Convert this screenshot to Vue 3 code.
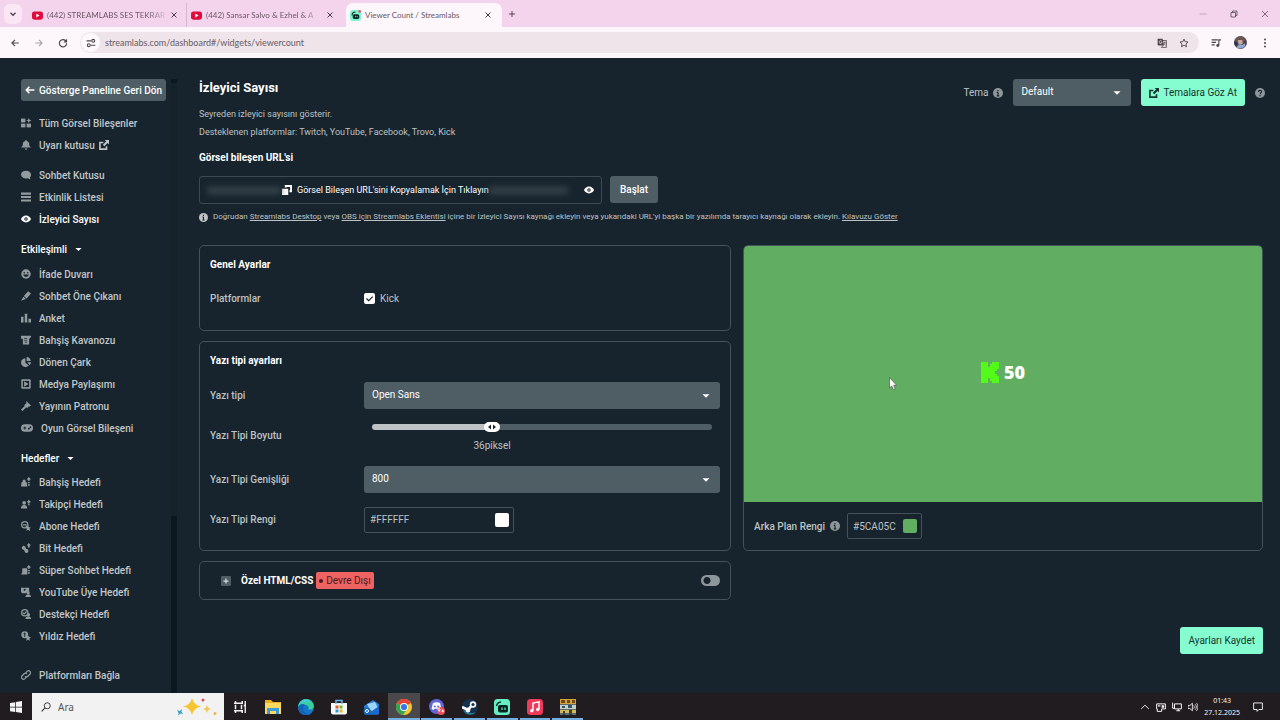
<script setup>
import { ref, computed } from 'vue'

const tabs = [
  { title: '(442) STREAMLABS SES TEKRAR', icon: 'youtube' },
  { title: '(442) Sansar Salvo & Ezhel & A', icon: 'youtube' },
  { title: 'Viewer Count / Streamlabs', icon: 'streamlabs', active: true }
]

const icons = {
  chevronDown: '<path d="M4 6l4 4 4-4" fill="none" stroke="currentColor" stroke-width="2"/>',
  chevronUp: '<path d="M2 11l6-6 6 6" fill="none" stroke="currentColor" stroke-width="1.5"/>',
  close: '<path d="M3 3l10 10M13 3L3 13" fill="none" stroke="currentColor" stroke-width="2"/>',
  closeThin: '<path d="M2 2l12 12M14 2L2 14" fill="none" stroke="currentColor" stroke-width="1.4"/>',
  plus: '<path d="M8 2v12M2 8h12" fill="none" stroke="currentColor" stroke-width="1.8"/>',
  minimize: '<path d="M1 8h14" stroke="#a590a0" stroke-width="1.3"/>',
  restore: '<path d="M2 5h9v9H2zM5 5V2h9v9h-3" fill="none" stroke="currentColor" stroke-width="1.5"/>',
  back: '<path d="M14 8H3M8 3L3 8l5 5" fill="none" stroke="currentColor" stroke-width="1.8"/>',
  backBold: '<path d="M15 8H3M7 3L2 8l5 5" fill="none" stroke="currentColor" stroke-width="2.4"/>',
  forward: '<path d="M2 8h11M8 3l5 5-5 5" fill="none" stroke="currentColor" stroke-width="1.8"/>',
  reload: '<path d="M13 5.5A5.8 5.8 0 1 0 13.800 8.500" fill="none" stroke="currentColor" stroke-width="1.9"/><path d="M14.500 1v6h-6z" fill="currentColor"/>',
  tune: '<g fill="none" stroke="currentColor" stroke-width="1.8"><path d="M1 4.500h7M8 11.500h7"/><circle cx="11.500" cy="4.500" r="2.300"/><circle cx="4.500" cy="11.500" r="2.300"/></g>',
  translate: '<path d="M1 1h8l2 11H3a2 2 0 0 1-2-2z" fill="currentColor"/><path d="M8 4h7v11H7l3-3" fill="none" stroke="currentColor" stroke-width="1.3"/><path d="M10 7h4M12 6v1M13.500 7c-.5 2-2 3.500-3.500 4M10.500 8.500c1 1.500 2 2.300 3.500 3" fill="none" stroke="currentColor"/><path d="M7.500 5A2.300 2.300 0 1 0 8 7H6" fill="none" stroke="#efe4ea" stroke-width="1.200"/>',
  star: '<path d="M8 1.800l1.900 4.100 4.500.5-3.300 3.100.9 4.500-4-2.300-4 2.300.9-4.500-3.300-3.100 4.500-.5z" fill="none" stroke="currentColor" stroke-width="1.500"/>',
  queue: '<path d="M1 3h10M1 7h7M1 11h5M12.500 12V3H16" fill="none" stroke="currentColor" stroke-width="1.800"/><circle cx="10.800" cy="12" r="2.300" fill="currentColor"/>',
  more: '<g fill="currentColor"><circle cx="8" cy="2.500" r="1.600"/><circle cx="8" cy="8" r="1.600"/><circle cx="8" cy="13.500" r="1.600"/></g>',
  avatar: '<circle cx="8" cy="8" r="8" fill="#4b4652"/><path d="M1 5C4-1 12-1 15 5l-4 2-4-3-3 4z" fill="#6c5750"/><path d="M5 5h5l1 4-3 2-3-2z" fill="#c9a79d"/><path d="M3 14l3-4 4 1 3-2 1 3c-3 4-8 4-11 2z" fill="#92a7cf"/><path d="M1 6l3 3-1 4C0 11 0 8 1 6z" fill="#243454"/>',
  youtube: '<rect y="2" width="16" height="12" rx="3.500" fill="#e00a3c"/><path d="M6.300 5.200v5.600L11 8z" fill="#fff"/>',
  streamlabs: '<rect width="16" height="16" rx="4" fill="#80f5d2"/><path d="M3 8a5 5 0 0 1 5-5" fill="none" stroke="#0b2a25" stroke-width="1.500"/><rect x="4" y="6" width="9.500" height="7" rx="2.500" fill="#08251f"/><path d="M8 8.500v2M10.500 8.500v2" stroke="#80f5d2" stroke-width="1.200"/><circle cx="14" cy="2" r="2" fill="#e8536a"/>',
  grid: '<g fill="currentColor"><rect y="1" width="7" height="6"/><rect y="9" width="7" height="6"/><rect x="9" y="9" width="7" height="6"/><path d="M12.500 0l1.300 2.700 2.700 1.300-2.700 1.300-1.300 2.700-1.300-2.700L8.500 4l2.700-1.300z"/></g>',
  bell: '<path d="M7 0h2v1.500c2.500.5 4 2.300 4 4.500 0 3.500 1 4 3 6H0c2-2 3-2.500 3-6 0-2.200 1.500-4 4-4.500zM6 13.500h4a2 2 0 0 1-4 0z" fill="currentColor"/>',
  external: '<path d="M7 4H1.500v10.500H12V10" fill="none" stroke="currentColor" stroke-width="2.600"/><path d="M9 0h7v7l-2.300-2.300-5.200 5.200-2.400-2.400 5.200-5.200z" fill="currentColor"/>',
  chat: '<path d="M8 1c4.500 0 8 2.500 8 6 0 2.300-.5 3.500-1.500 4.500L15 15l-4-1.800c-6 1.500-11-1.700-11-6C0 3.500 3.500 1 8 1z" fill="currentColor"/>',
  list: '<path d="M0 2.500h16M0 8h16M0 13.500h16" stroke="currentColor" stroke-width="3.400"/>',
  eye: '<path d="M8 2.500c4 0 7 3 8 5.500-1 2.500-4 5.500-8 5.500S1 10.500 0 8c1-2.500 4-5.500 8-5.500z" fill="currentColor"/><circle cx="8" cy="8" r="2.800" fill="#17242d"/><circle cx="8" cy="8" r="1.200" fill="currentColor"/>',
  smile: '<circle cx="8" cy="8" r="7.500" fill="currentColor"/><g fill="#17242d"><circle cx="5.200" cy="6" r="1.300"/><circle cx="10.800" cy="6" r="1.300"/><path d="M3.500 8.800h9c-.8 5-8.200 5-9 0z"/></g>',
  highlighter: '<path d="M11.500 0.500L16 4 9 12 4.500 8zM3.800 9l4.200 3.700-4 1.300L0 15.500z" fill="currentColor"/>',
  bars: '<path d="M0 6h4v9H0zM6 1h4v14H6zM12 9h4v6h-4z" fill="currentColor"/>',
  jar: '<path d="M0 1h16v3h-2v2h-1v9H3V6H0z" fill="currentColor"/><path d="M5 5.500h5M5 8.500h5M6 11.500h4" stroke="#17242d" stroke-width="1.200"/>',
  pie: '<path d="M7 2v7l5.500 4.500A7 7 0 1 1 7 2z" fill="currentColor"/><path d="M9 0a7 7 0 0 1 6.500 6.500H9zM10 8.500h6a7 7 0 0 1-2 4.500z" fill="currentColor"/>',
  play: '<rect x=".5" y=".5" width="15" height="15" rx="1.500" fill="currentColor"/><rect x="3" y="3" width="10" height="10" fill="#17242d"/><path d="M5 3.500v9l7-4.500z" fill="currentColor"/>',
  gavel: '<path d="M8.500 0l7.500 7-2.500 2-1-.5-2.500 3L8.500 10 2.500 16 0 13.500 6 8 5 6.500 8.500 4z" fill="currentColor"/>',
  gamepad: '<rect y="3" width="16" height="10" rx="5" fill="currentColor"/><path d="M3 8h4M5 6v4" stroke="#17242d" stroke-width="1.300"/><circle cx="10.500" cy="9" r="1.200" fill="#17242d"/><circle cx="12.500" cy="7" r="1.200" fill="#17242d"/>',
  tipGoal: '<g fill="currentColor"><path d="M1 8h8l1 7H0z"/><circle cx="5" cy="6.500" r="2.500"/><path d="M12.500 0L16 4h-2v2h-3V4H9zM11 8h3v2h-3zM11 11.500h3V14h-3z"/></g>',
  followGoal: '<g fill="currentColor"><circle cx="5" cy="6" r="3"/><path d="M0 15c0-7 10-7 10 0zM12.500 1L16 5h-2v2h-3V5H9zM11 8.500h3V10h-3z"/></g>',
  subGoal: '<circle cx="6" cy="6" r="5" fill="none" stroke="currentColor" stroke-width="2"/><path d="M3 6h6M8 8l6 7" stroke="currentColor" stroke-width="2"/><path d="M11.500 7l1.200 3 3.300.3-2.500 2 .8 3.200-2.800-1.700L8.700 15.500l.8-3.200-2.500-2 3.300-.3z" fill="currentColor"/>',
  bitGoal: '<g fill="currentColor"><path d="M4 4l3 2 1 3 3 1 1 3-2 3H8l-2-2-1-3-3-1-1-3zM12.500 0L16 4h-2v3h-3V4H9z"/></g>',
  chatGoal: '<path d="M3 5h6l1 1v9H0l2-3V6zM12.500 0L16 4h-2v2h-3V4H9zM11 8h3v2h-3zM11 11.500h3V14h-3z" fill="currentColor"/>',
  memberGoal: '<path d="M0 1h13v5L8 10H2L0 8z" fill="currentColor"/><path d="M4.500 2.500v4l4-2z" fill="#17242d"/><circle cx="11.500" cy="9" r="2.500" fill="currentColor"/><path d="M7 16c0-6 9-6 9 0z" fill="currentColor"/>',
  supportGoal: '<circle cx="6" cy="6" r="5" fill="none" stroke="currentColor" stroke-width="2"/><path d="M3 6l2 2 4-4" fill="none" stroke="currentColor" stroke-width="1.800"/><circle cx="12" cy="9" r="2.500" fill="currentColor"/><path d="M7 16c0-6 9-6 9 0z" fill="currentColor"/>',
  starGoal: '<circle cx="6" cy="6" r="5.500" fill="currentColor"/><path d="M6 2.500v7M4 4.500h3" stroke="#17242d" stroke-width="1.500"/><path d="M11 6l1.500 3.300L16 10l-2.500 2 .8 3.500-3-1.700-3 1.700.8-3.500-2.600-2L9.500 9.300z" fill="currentColor"/>',
  link: '<path d="M7 5l3-3a3.200 3.200 0 0 1 4.500 4.500L11 10a3.200 3.200 0 0 1-4.500 0M9 11l-3 3a3.200 3.200 0 0 1-4.500-4.500L5 6a3.200 3.200 0 0 1 4.500 0" fill="none" stroke="currentColor" stroke-width="2"/>',
  caret: '<path d="M1 4.500h14l-7 7z" fill="currentColor"/>',
  info: '<circle cx="8" cy="8" r="8" fill="currentColor"/><path d="M8 3v2.200M8 7v5.500M6 7h2M6 12.500h4" stroke="#17242d" stroke-width="1.800"/>',
  help: '<circle cx="8" cy="8" r="8" fill="currentColor"/><path d="M5.500 6.500c0-3.500 5-3.300 5-.5 0 1.800-2.500 1.700-2.500 4M8 11.200v2" fill="none" stroke="#17242d" stroke-width="1.800"/>',
  copy: '<path d="M0 6h10v10H0z" fill="currentColor"/><path d="M6 4V1.500h8.500V10H12" fill="none" stroke="currentColor" stroke-width="3"/>',
  plusBox: '<rect width="16" height="16" rx="2" fill="#4f5e65"/><path d="M8 4v8M4 8h8" stroke="#d6dadc" stroke-width="2"/>',
  windows: '<path d="M0 2.500l7-1v6H0zM8 1.400L16 0v7.500H8zM0 8.500h7v6l-7-1zM8 8.500h8V16l-8-1.400z" fill="currentColor"/>',
  search: '<circle cx="10" cy="6" r="4.800" fill="none" stroke="currentColor" stroke-width="1.500"/><path d="M6.500 9.500L1 15" stroke="currentColor" stroke-width="1.700"/>',
  taskView: '<g transform="translate(2 2) scale(.75)"><path d="M2 0v3M11 0v3M2 16v-3M11 16v-3M0 3h12M0 13h12M2 5v6M10 5v6" fill="none" stroke="currentColor" stroke-width="2"/><path d="M15 0v16M13 6h3" stroke="currentColor" stroke-width="1.800"/></g>',
  folder: '<path d="M0 1h6l2 2h8v12H0z" fill="#e9ae24"/><path d="M0 4h16v11H0z" fill="#ffd95e"/><path d="M2 9h12v6h-3v-3H5v3H2z" fill="#3c9ade"/>',
  edge: '<circle cx="8" cy="8" r="8" fill="#1677ca"/><path d="M0 8C1 1 7-1 11 .6 16 3 17 8 14.500 10c-2 1.200-4.500.5-4-1 .6-3.500-5.500-4.500-10.500-1z" fill="#35d09b"/><path d="M0 9c1-4 5-5 7-3-3 2-2 7 2 8.500 2 .6 4-.2 5.500-1.500A8 8 0 0 1 0 9z" fill="#1265b5"/><path d="M2 4C5 0 10 0 12 3 8 1.500 4 3 1 6z" fill="#4dc4ee"/>',
  store: '<path d="M0 4h16v9.500a2 2 0 0 1-2 2H2a2 2 0 0 1-2-2z" fill="#f5f7f8"/><path d="M5 5V1.500h6V5" fill="none" stroke="#68b4ec" stroke-width="1.500"/><path d="M4.500 6.500h3v3h-3z" fill="#e65a33"/><path d="M8.500 6.500h3v3h-3z" fill="#78b82a"/><path d="M4.500 10.500h3v3h-3z" fill="#2f9ae0"/><path d="M8.500 10.500h3v3h-3z" fill="#f3b51c"/>',
  mail: '<path d="M1 7l9-6 6 4v9a1.500 1.500 0 0 1-1.500 1.500h-12A1.500 1.500 0 0 1 1 14z" fill="#2b7bd8"/><path d="M4 5l8-2 3 6-7 4z" fill="#9ad6f8"/><path d="M1 8l8 4 7-5v7a1.500 1.500 0 0 1-1.500 1.500h-12A1.500 1.500 0 0 1 1 14z" fill="#1b69cc"/><circle cx="4" cy="12" r="3.500" fill="#1265b3"/><circle cx="4" cy="12" r="1.500" fill="none" stroke="#fff"/>',
  chrome: '<circle cx="8" cy="8" r="8" fill="#f5c82d"/><path d="M8 8L1 4a8 8 0 0 1 14 0z" fill="#e34436"/><path d="M8 8L1 4a8 8 0 0 0 6 12l4-6z" fill="#35a353"/><circle cx="8" cy="8" r="4" fill="#fff"/><circle cx="8" cy="8" r="3.100" fill="#3677e5"/>',
  discord: '<circle cx="7.500" cy="7.500" r="7.500" fill="#6265d6"/><path d="M4 4c2-1 5-1 7 0l1.500 6-2 1-1-1.200H5.500L4.500 11l-2-1z" fill="#fff"/><circle cx="5.800" cy="7.500" r="1" fill="#6265d6"/><circle cx="9.200" cy="7.500" r="1" fill="#6265d6"/><circle cx="12" cy="12" r="4" fill="#e7505b"/><path d="M10.800 11.200a1 1 0 1 0-.1.100v1.500M12.500 12h2.500M13.700 10.700v2.600" fill="none" stroke="#fff" stroke-width=".9"/>',
  steam: '<circle cx="8" cy="8" r="8" fill="#16314c"/><path d="M1 11c4 1 9 5 13 2-3 4-10 4-13-2z" fill="#247b94"/><path d="M0 8l6 3 5-6" fill="none" stroke="#fff" stroke-width="2.600"/><circle cx="11" cy="5.500" r="3.200" fill="#fff"/><circle cx="11" cy="5.500" r="1.600" fill="#16314c"/><circle cx="6" cy="11" r="2.400" fill="#fff"/>',
  slobs: '<rect width="16" height="16" rx="3.500" fill="#66efc5"/><path d="M2.500 7A5 5 0 0 1 7 3" fill="none" stroke="#0c3029" stroke-width="1.400"/><rect x="4" y="6" width="10" height="7.500" rx="2" fill="#08251f"/><path d="M8 8.500v2.500M11 8.500v2.500" stroke="#66efc5" stroke-width="1.200"/>',
  music: '<rect width="16" height="16" rx="3.500" fill="#ef3a59"/><path d="M6 11.500V4l6-1.200v7.500" fill="none" stroke="#fff" stroke-width="1.500"/><circle cx="4.800" cy="11.700" r="1.700" fill="#fff"/><circle cx="10.800" cy="10.500" r="1.700" fill="#fff"/>',
  game: '<rect width="16" height="16" fill="#596a70"/><path d="M0 0h16v5H0z" fill="#d6a33d"/><path d="M1 1h4v3H1zM7 1h3v3H7zM12 1h3v3h-3z" fill="#6d4b1f"/><path d="M0 6h16v4H0z" fill="#c4cfc6"/><path d="M2 7h3v2H2zM8 6h4v3H8z" fill="#375266"/><path d="M0 11h16v3H0z" fill="#d5b850"/><path d="M3 12h2v4H3zM9 11h3v5H9z" fill="#344049"/>',
  tray: '<path d="M1 3h14v8H9v4H2v-4H1z" fill="none" stroke="currentColor" stroke-width="1.600"/><path d="M9 5h4v4H9zM3 5h4v2H3z" fill="currentColor"/>',
  network: '<path d="M4 3h11v8H4zM7 14h6M10 11v3M1 1v9h3" fill="none" stroke="currentColor" stroke-width="1.600"/>',
  volume: '<path d="M0 5.500h3L7 2v12l-4-3.500H0z" fill="none" stroke="currentColor" stroke-width="1.400"/><path d="M9 5.500c1.500 1.500 1.500 3.500 0 5M11.300 3.500c2.700 2.500 2.700 6.500 0 9M13.300 1.500c3.500 3.500 3.500 9.500 0 13" fill="none" stroke="currentColor" stroke-width="1.300"/>',
  notice: '<path d="M1 1.500h14v10.500H9.500L6.500 15v-3H1z" fill="none" stroke="currentColor" stroke-width="1.500"/>'
}

const groups = [
  { id: 'all', items: [
    { label: 'Tüm Görsel Bileşenler', icon: 'grid' },
    { label: 'Uyarı kutusu', icon: 'bell', external: true }
  ] },
  { id: 'basic', items: [
    { label: 'Sohbet Kutusu', icon: 'chat' },
    { label: 'Etkinlik Listesi', icon: 'list' },
    { label: 'İzleyici Sayısı', icon: 'eye', active: true }
  ] },
  { id: 'interactive', title: 'Etkileşimli', items: [
    { label: 'İfade Duvarı', icon: 'smile' },
    { label: 'Sohbet Öne Çıkanı', icon: 'highlighter' },
    { label: 'Anket', icon: 'bars' },
    { label: 'Bahşiş Kavanozu', icon: 'jar' },
    { label: 'Dönen Çark', icon: 'pie' },
    { label: 'Medya Paylaşımı', icon: 'play' },
    { label: 'Yayının Patronu', icon: 'gavel' },
    { label: 'Oyun Görsel Bileşeni', icon: 'gamepad', wide: true }
  ] },
  { id: 'goals', title: 'Hedefler', items: [
    { label: 'Bahşiş Hedefi', icon: 'tipGoal' },
    { label: 'Takipçi Hedefi', icon: 'followGoal' },
    { label: 'Abone Hedefi', icon: 'subGoal' },
    { label: 'Bit Hedefi', icon: 'bitGoal' },
    { label: 'Süper Sohbet Hedefi', icon: 'chatGoal' },
    { label: 'YouTube Üye Hedefi', icon: 'memberGoal' },
    { label: 'Destekçi Hedefi', icon: 'supportGoal' },
    { label: 'Yıldız Hedefi', icon: 'starGoal' }
  ] },
  { id: 'connect', items: [{ label: 'Platformları Bağla', icon: 'link' }] }
]

const apps = [
  { name: 'Görev Görünümü', icon: 'taskView' },
  { name: 'Dosya Gezgini', icon: 'folder' },
  { name: 'Edge', icon: 'edge' },
  { name: 'Store', icon: 'store' },
  { name: 'Posta', icon: 'mail' },
  { name: 'Chrome', icon: 'chrome', open: true, focused: true },
  { name: 'Discord', icon: 'discord', open: true },
  { name: 'Steam', icon: 'steam', open: true },
  { name: 'Streamlabs', icon: 'slobs', open: true },
  { name: 'Müzik', icon: 'music', open: true },
  { name: 'Oyun', icon: 'game', open: true }
]

const kick = ref(true)
const customCss = ref(false)
const fontSize = ref(36)
const maxSize = 104
const fill = computed(() => `${(fontSize.value / maxSize) * 100}%`)
const textColor = ref('#FFFFFF')
const background = ref('#5CA05C')
</script>

<template>
  <div class="screen">
    <header class="tabstrip">
      <button class="tab-search" aria-label="Sekmelerde ara"><svg viewBox="0 0 16 16" v-html="icons.chevronDown"></svg></button>
      <div v-for="(tab, i) in tabs" :key="i" class="tab" :class="{ active: tab.active }">
        <svg class="favicon" viewBox="0 0 16 16" v-html="icons[tab.icon]"></svg>
        <span class="tab-title">{{ tab.title }}</span>
        <button class="tab-close" aria-label="Kapat"><svg viewBox="0 0 16 16" v-html="icons.close"></svg></button>
      </div>
      <button class="new-tab" aria-label="Yeni sekme"><svg viewBox="0 0 16 16" v-html="icons.plus"></svg></button>
      <div class="window-controls">
        <button aria-label="Küçült"><svg viewBox="0 0 16 16" v-html="icons.minimize"></svg></button>
        <button aria-label="Geri yükle"><svg viewBox="0 0 16 16" v-html="icons.restore"></svg></button>
        <button aria-label="Pencereyi kapat"><svg viewBox="0 0 16 16" v-html="icons.closeThin"></svg></button>
      </div>
    </header>

    <div class="toolbar">
      <button aria-label="Geri"><svg viewBox="0 0 16 16" v-html="icons.back"></svg></button>
      <button class="muted" aria-label="İleri"><svg viewBox="0 0 16 16" v-html="icons.forward"></svg></button>
      <button aria-label="Yenile"><svg viewBox="0 0 16 16" v-html="icons.reload"></svg></button>
      <div class="omnibox">
        <button class="site-info" aria-label="Site bilgisi"><svg viewBox="0 0 16 16" v-html="icons.tune"></svg></button>
        <input type="text" value="streamlabs.com/dashboard#/widgets/viewercount" aria-label="Adres" />
        <button aria-label="Çevir"><svg viewBox="0 0 16 16" v-html="icons.translate"></svg></button>
        <button aria-label="Yer işareti"><svg viewBox="0 0 16 16" v-html="icons.star"></svg></button>
      </div>
      <div class="tools">
        <button aria-label="Medya"><svg viewBox="0 0 16 16" v-html="icons.queue"></svg></button>
        <button class="profile" aria-label="Profil"><svg viewBox="0 0 16 16" v-html="icons.avatar"></svg></button>
        <button aria-label="Menü"><svg viewBox="0 0 16 16" v-html="icons.more"></svg></button>
      </div>
    </div>

    <div class="page">
      <aside class="sidebar">
        <nav>
          <button class="back-button"><svg viewBox="0 0 16 16" v-html="icons.backBold"></svg>Gösterge Paneline Geri Dön</button>
          <section v-for="group in groups" :key="group.id" class="group" :class="group.id">
            <button v-if="group.title" class="group-title">{{ group.title }}<svg viewBox="0 0 16 16" v-html="icons.caret"></svg></button>
            <a v-for="item in group.items" :key="item.label" href="#" class="item" :class="{ active: item.active, wide: item.wide }">
              <svg viewBox="0 0 16 16" v-html="icons[item.icon]"></svg>{{ item.label }}
              <svg v-if="item.external" class="external" viewBox="0 0 16 16" v-html="icons.external"></svg>
            </a>
          </section>
        </nav>
        <div class="scrollbar"><div class="scroll-thumb"></div></div>
      </aside>

      <main class="main">
        <div class="heading">
          <div>
            <h1>İzleyici Sayısı</h1>
            <p>Seyreden izleyici sayısını gösterir.</p>
            <p>Desteklenen platformlar: Twitch, YouTube, Facebook, Trovo, Kick</p>
          </div>
          <div class="theme">
            <label for="theme">Tema</label>
            <svg class="note-icon" viewBox="0 0 16 16" v-html="icons.info"></svg>
            <div class="select theme-select">
              <select id="theme"><option>Default</option></select>
              <svg viewBox="0 0 16 16" v-html="icons.caret"></svg>
            </div>
            <button class="primary browse"><svg viewBox="0 0 16 16" v-html="icons.external"></svg>Temalara Göz At</button>
            <svg class="help-icon" viewBox="0 0 16 16" v-html="icons.help"></svg>
          </div>
        </div>

        <h2 class="url-title">Görsel bileşen URL'si</h2>
        <div class="url-row">
          <div class="url-box">
            <span class="masked left"></span>
            <button class="copy"><svg viewBox="0 0 16 16" v-html="icons.copy"></svg>Görsel Bileşen URL'sini Kopyalamak İçin Tıklayın</button>
            <span class="masked right"></span>
            <button class="reveal" aria-label="URL'yi göster"><svg viewBox="0 0 16 16" v-html="icons.eye"></svg></button>
          </div>
          <button class="secondary">Başlat</button>
        </div>
        <p class="hint">
          <svg viewBox="0 0 16 16" v-html="icons.info"></svg>
          <span>Doğrudan <a href="#">Streamlabs Desktop</a> veya <a href="#">OBS için Streamlabs Eklentisi</a> içine bir İzleyici Sayısı kaynağı ekleyin veya yukarıdaki URL'yi başka bir yazılımda tarayıcı kaynağı olarak ekleyin. <a href="#">Kılavuzu Göster</a></span>
        </p>

        <div class="columns">
          <div class="settings">
            <section class="card general">
              <h2>Genel Ayarlar</h2>
              <div class="field">
                <span class="name">Platformlar</span>
                <label class="check"><input v-model="kick" type="checkbox" />Kick</label>
              </div>
            </section>

            <section class="card fonts">
              <h2>Yazı tipi ayarları</h2>
              <div class="field">
                <label class="name" for="font">Yazı tipi</label>
                <div class="select">
                  <select id="font"><option>Open Sans</option></select>
                  <svg viewBox="0 0 16 16" v-html="icons.caret"></svg>
                </div>
              </div>
              <div class="field size-field">
                <label class="name" for="size">Yazı Tipi Boyutu</label>
                <div class="slider" :style="{ '--fill': fill }">
                  <input id="size" v-model.number="fontSize" type="range" min="0" :max="maxSize" />
                  <div class="slider-scale"><div class="slider-mark"><output for="size">{{ fontSize }}piksel</output></div></div>
                </div>
              </div>
              <div class="field">
                <label class="name" for="weight">Yazı Tipi Genişliği</label>
                <div class="select">
                  <select id="weight"><option>800</option></select>
                  <svg viewBox="0 0 16 16" v-html="icons.caret"></svg>
                </div>
              </div>
              <div class="field">
                <label class="name" for="color">Yazı Tipi Rengi</label>
                <div class="color-box">
                  <input id="color" v-model="textColor" type="text" />
                  <input type="color" value="#ffffff" aria-label="Yazı tipi rengini seç" />
                </div>
              </div>
            </section>

            <section class="card custom">
              <button class="expand" aria-label="Genişlet"><svg viewBox="0 0 16 16" v-html="icons.plusBox"></svg></button>
              <h2>Özel HTML/CSS</h2>
              <span class="badge">Devre Dışı</span>
              <input v-model="customCss" class="toggle" type="checkbox" role="switch" aria-label="Özel HTML/CSS" />
            </section>
          </div>

          <section class="preview">
            <div class="stage">
              <svg class="kick" viewBox="0 0 18 21"><path d="M0 0h7v5h2V2h2V0h7v7h-2v2h-2v3h2v2h2v7h-7v-2H9v-3H7v5H0z" fill="#53fc18"/></svg>
              <span class="count">50</span>
              <svg class="pointer" viewBox="0 0 8 13"><path d="M.5.5v10.500l2.300-2 1.600 3.500 1.800-.8-1.600-3.400h3z" fill="#fff" stroke="#444" stroke-width=".6"/></svg>
            </div>
            <div class="stage-footer">
              <label for="bg">Arka Plan Rengi</label>
              <svg class="note-icon" viewBox="0 0 16 16" v-html="icons.info"></svg>
              <div class="color-box small">
                <input id="bg" v-model="background" type="text" />
                <input type="color" value="#61ad61" aria-label="Arka plan rengini seç" />
              </div>
            </div>
          </section>
        </div>

        <button class="primary save">Ayarları Kaydet</button>
      </main>
    </div>

    <footer class="taskbar">
      <button class="start" aria-label="Başlat"><svg viewBox="0 0 16 16" v-html="icons.windows"></svg></button>
      <label class="search">
        <svg viewBox="0 0 16 16" v-html="icons.search"></svg>
        <input type="text" placeholder="Ara" aria-label="Ara" />
        <svg class="sparkles" viewBox="0 0 42 20">
          <path d="M16 1q1.500 7 9 8.500-7.500 1.500-9 8.500-1.500-7-9-8.500Q14.500 8 16 1z" fill="#f7c52d"/>
          <path d="M31 8q.8 3.500 4 4-3.200.6-4 4-.8-3.400-4-4 3.200-.5 4-4z" fill="#f0c956"/>
          <path d="M1 13l2.500 1L6 12l-.5 2.500L7 17l-2.500-.5L2 18.500l.5-2.500z" fill="#3ba4c6"/>
          <circle cx="27" cy="3" r="1.500" fill="#d0505b"/><circle cx="39" cy="16.500" r="1.500" fill="#efb64c"/>
        </svg>
      </label>
      <div class="apps">
        <button v-for="app in apps" :key="app.name" class="app" :class="{ open: app.open, focused: app.focused }" :aria-label="app.name">
          <svg viewBox="0 0 16 16" v-html="icons[app.icon]"></svg>
        </button>
      </div>
      <div class="tray">
        <svg v-for="name in ['chevronUp', 'tray', 'network', 'volume']" :key="name" viewBox="0 0 16 16" v-html="icons[name]"></svg>
        <div class="clock"><span>01:43</span><span>27.12.2025</span></div>
        <button class="notice" aria-label="Bildirimler"><svg viewBox="0 0 16 16" v-html="icons.notice"></svg></button>
      </div>
    </footer>
  </div>
</template>

<style>
body { margin: 0; background: #17242d; }
</style>

<style scoped>
* { box-sizing: border-box; }
.screen { min-height: 100vh; display: flex; flex-direction: column; font-family: Roboto, "Liberation Sans", sans-serif; font-size: 10px; color: #bdc2c4; background: #17242d; }
button, input, select { font: inherit; color: inherit; border: 0; background: none; padding: 0; margin: 0; }
button { display: flex; align-items: center; justify-content: center; cursor: pointer; white-space: nowrap; }
svg { display: block; flex: none; width: 10px; height: 10px; }
h1, h2, p { margin: 0; }
h2 { font-size: 10px; line-height: 16px; font-weight: 700; color: #fff; }
a { color: inherit; }

.tabstrip { height: 27px; display: flex; align-items: center; background: #f4d4ec; color: #4a3d47; font-family: Lato, "Noto Sans", sans-serif; font-size: 8px; }
.tab-search { width: 18px; height: 20px; margin: 0 6px 0 4px; border-radius: 6px; background: #fae6f4; }
.tab { display: flex; align-items: center; width: 159px; height: 24px; padding: 0 8px 0 4px; align-self: flex-end; }
.tab:nth-of-type(1) { border-right: 1px solid #d9b6d0; }
.tab.active { width: 156px; padding-right: 6px; background: #fdf6fb; border-radius: 7px 7px 0 0; }
.favicon { width: 11px; height: 11px; margin-right: 4px; }
.tab-title { flex: 1; white-space: nowrap; color: #695964; }
.tab:not(.active) .tab-title { mask-image: linear-gradient(90deg, #000 85%, rgba(0, 0, 0, 0.2)); }
.tab-close { width: 16px; margin-left: 4px; }
.tab-close svg { width: 8px; height: 8px; }
.new-tab { width: 20px; }
.new-tab svg { width: 8px; height: 8px; }
.window-controls { margin-left: auto; display: flex; }
.window-controls button { width: 31px; }
.window-controls svg { width: 8px; height: 8px; }

.toolbar { height: 31px; display: flex; align-items: center; padding: 0 10px 0 3px; background: #fdf6fb; color: #4e454b; }
.toolbar > button { width: 24px; }
.toolbar .muted { color: #aaa1a7; }
.omnibox { flex: 1; height: 21px; display: flex; align-items: center; gap: 12px; margin-left: 5px; padding: 0 10px 0 1px; border-radius: 11px; background: #efe4ea; }
.omnibox input { flex: 1; min-width: 0; margin-left: -7px; outline: 0; font-family: Lato, "Noto Sans", sans-serif; font-size: 9px; color: #665c63; }
.site-info { width: 19px; height: 19px; border-radius: 50%; background: #fdf8fb; }
.tools { display: flex; align-items: center; gap: 13px; margin-left: 12px; }
.profile svg { width: 13px; height: 13px; }

.page { flex: 1; display: flex; }
.sidebar { width: 177px; flex: none; display: flex; padding-top: 21px; }
nav { flex: 1; padding: 0 5px 7px 21px; }
.back-button { width: 100%; height: 22px; gap: 4px; border-radius: 3px; background: #4f5e65; color: #fff; font-weight: 500; }
.group { margin-top: 8px; }
.group.all { margin-top: 11px; }
.group.connect { margin-top: 17px; }
.group-title { height: 22px; gap: 8px; margin-bottom: 3px; color: #fff; font-weight: 500; }
.goals .group-title { margin-bottom: 2px; }
.group-title svg { width: 7px; height: 7px; }
.item { display: flex; align-items: center; height: 22px; gap: 8px; color: #c1c6c9; font-weight: 500; text-decoration: none; white-space: nowrap; }
.item svg { color: #929b9f; }
.item.wide svg { width: 12px; height: 12px; }
.item .external { margin-left: -4px; color: #c1c6c9; }
.item.active, .item.active svg { color: #fff; }
.scrollbar { width: 6px; background: #0b181f; padding-top: 4px; }
.scroll-thumb { height: 71%; background: #15222a; }

.main { flex: 1; min-width: 0; display: flex; flex-direction: column; padding: 21px 17px 16px 22px; }
.heading { display: flex; justify-content: space-between; align-items: flex-start; }
h1 { font-size: 13px; line-height: 18px; margin-bottom: 8px; font-weight: 700; color: #fff; }
.heading p { font-size: 9px; line-height: 18px; }
.theme { display: flex; align-items: center; }
.note-icon { color: #8d969b; margin-left: 5px; }
.help-icon { color: #8d969b; margin-left: 10px; margin-right: -2px; }
.select { position: relative; height: 27px; border-radius: 3px; background: #4f5e65; color: #fff; }
.select select { appearance: none; width: 100%; height: 100%; padding: 0 24px 2px 8px; outline: 0; }
.select svg { position: absolute; right: 10px; top: 10px; width: 8px; height: 8px; pointer-events: none; }
.theme-select { width: 118px; margin: 0 10px; }
.primary { height: 27px; padding: 0 8px; gap: 4px; border-radius: 3px; background: #86fcd1; color: #17352f; }

.url-title { margin-top: 9px; }
.url-row { display: flex; gap: 8px; margin-top: 10px; }
.url-box { width: 403px; height: 28px; display: flex; align-items: center; border: 1px solid #3b4950; border-radius: 3px; padding: 0 7px; }
.masked { height: 7px; background: #37444b; filter: blur(3px); }
.masked.left { width: 74px; }
.masked.right { flex: 1; margin-right: 16px; }
.copy { gap: 5px; color: #fff; margin-left: 1px; font-size: 9px; }
.secondary { width: 48px; height: 27px; border-radius: 3px; background: #4f5e65; color: #fff; font-weight: 500; }
.reveal { color: #fff; }
.hint { display: flex; align-items: center; gap: 5px; margin-top: 6px; line-height: 14px; font-size: 8px; }
.hint svg { width: 9px; height: 9px; }

.columns { display: grid; grid-template-columns: 532fr 520fr; gap: 12px; margin-top: 21px; align-items: start; }
.settings { display: flex; flex-direction: column; gap: 10px; }
.card { border: 1px solid #435159; border-radius: 5px; padding: 11px 10px; }
.general { height: 86px; }
.field { display: flex; align-items: center; min-height: 27px; }
.field .name { width: 154px; flex: none; font-weight: 500; }
.field .select { flex: 1; }
.general .field { margin-top: 12px; }
.check { display: flex; align-items: center; gap: 5px; }
.check input { appearance: none; width: 11px; height: 11px; border-radius: 2px; background: #fff; }
.check input:checked { background: #fff url("data:image/svg+xml,%3Csvg xmlns='http://www.w3.org/2000/svg' viewBox='0 0 11 11'%3E%3Cpath d='M2.500 5.500l2.200 2.200 4-4' fill='none' stroke='%2317242d' stroke-width='1.200'/%3E%3C/svg%3E"); }
.fonts { display: flex; flex-direction: column; gap: 13px; padding-bottom: 17px; }
.size-field { height: 31px; }
.size-field .name { padding-bottom: 4px; }
.slider { flex: 1; padding: 0 8px; }
.slider input { appearance: none; display: block; width: 100%; height: 10px; outline: 0; }
.slider input::-webkit-slider-runnable-track { height: 6px; border-radius: 3px; background: linear-gradient(90deg, #bdc2c4 var(--fill), #4f5e65 var(--fill)); }
.slider input::-webkit-slider-thumb { appearance: none; width: 16px; height: 10px; margin-top: -2px; border-radius: 5px; background: #fff url("data:image/svg+xml,%3Csvg xmlns='http://www.w3.org/2000/svg' viewBox='0 0 16 10'%3E%3Cpath d='M7 2.500v5L4 5zM9 2.500v5l3-2.500z' fill='%2317242d'/%3E%3C/svg%3E"); }
.slider-scale { padding: 0 8px; }
.slider-mark { width: var(--fill); display: flex; justify-content: flex-end; margin-top: 6px; line-height: 15px; }
.slider-mark output { flex: none; width: 60px; margin-right: -30px; text-align: center; }
.color-box { display: flex; align-items: center; width: 150px; height: 26px; padding: 0 4px 0 5px; border: 1px solid #435159; border-radius: 2px; }
.color-box input[type="text"] { flex: 1; min-width: 0; width: 0; outline: 0; }
.color-box input[type="color"] { appearance: none; width: 14px; height: 14px; border-radius: 2px; overflow: hidden; }
.color-box input[type="color"]::-webkit-color-swatch-wrapper { padding: 0; }
.color-box input[type="color"]::-webkit-color-swatch { border: 0; }
.color-box.small { width: 75px; margin-left: 7px; }
.custom { display: flex; align-items: center; height: 39px; padding: 0 10px 0 21px; }
.custom h2 { margin: 0 3px 0 10px; }
.badge { display: flex; align-items: center; height: 17px; padding: 0 3px; border-radius: 2px; background: #ee6261; color: #4a1a20; }
.badge::before { content: ""; width: 4px; height: 4px; margin-right: 3px; border-radius: 50%; background: #4a1a20; }
.toggle { appearance: none; width: 19px; height: 11px; margin-left: auto; border-radius: 6px; background: radial-gradient(circle at 6px 50%, #17242d 3px, #8d969b 4px); }
.toggle:checked { background: radial-gradient(circle at 13px 50%, #17242d 3px, #80f5d2 4px); }

.preview { border: 1px solid #435159; border-radius: 5px; overflow: hidden; }
.stage { position: relative; height: 256px; display: flex; align-items: center; justify-content: center; gap: 5px; padding-bottom: 4px; background: #61ad61; }
.kick { width: 18px; height: 21px; }
.count { font: 800 18px/24px "Open Sans", sans-serif; color: #fff; }
.pointer { position: absolute; left: 28%; top: 131px; width: 8px; height: 13px; }
.stage-footer { display: flex; align-items: center; height: 48px; padding: 0 10px; font-weight: 500; }
.stage-footer .color-box { font-weight: 400; }
.save { align-self: flex-end; margin-top: 27px; }

.taskbar { height: 27px; display: flex; align-items: stretch; background: #211c20; color: #f4f4f4; font-family: "Noto Sans", sans-serif; }
.start { width: 32px; }
.start svg { width: 12px; height: 12px; }
.search { width: 192px; display: flex; align-items: center; gap: 7px; padding: 0 6px 0 9px; background: #f3f2f3; color: #333; }
.search input { flex: 1; min-width: 0; outline: 0; }
.search input::placeholder { color: #555; opacity: 1; }
.search .sparkles { width: 42px; height: 20px; }
.apps { display: flex; width: 360px; }
.app { flex: 1; border-bottom: 2px solid transparent; padding-top: 2px; }
.app svg { width: 16px; height: 16px; }
.app.open { border-image: linear-gradient(90deg, transparent 10%, #72afe0 10%, #72afe0 90%, transparent 90%) 2; }
.app.focused { background: #4b484b; border-image: none; border-color: #72afe0; }
.tray { margin-left: auto; display: flex; align-items: center; gap: 6px; }
.clock { display: flex; flex-direction: column; align-items: center; font-size: 7px; line-height: 12px; }
.notice { width: 24px; margin-right: 10px; }
</style>
